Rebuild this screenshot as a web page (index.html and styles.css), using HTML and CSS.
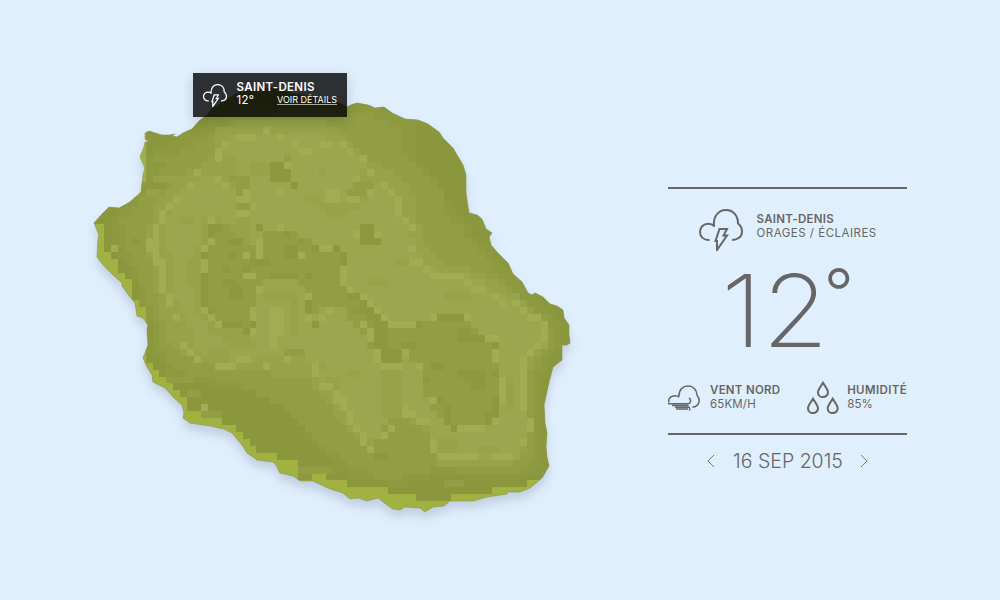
FILE: index.html
```html
<!DOCTYPE html>
<html lang="fr">
<head>
<meta charset="utf-8">
<title>Météo Saint-Denis</title>
<link rel="stylesheet" href="styles.css">
</head>
<body>
<svg class="defs" width="0" height="0">
  <symbol id="storm" viewBox="0 0 44 42">
    <path d="M10.500 31C4.500 31.500 1 27.500 1 22.900C1 18.300 4.500 14.700 9.300 14.700C11.700 14.700 13.700 15.500 15.300 17M15 17.800C13.800 8 19 1 27 1C34.500 1 39 7 39 14.500C41.500 16.500 43 19 43 22.500C43 28 38.500 31 33 31"/>
    <path d="M20.500 20H28L24.500 26.500H28L18 41V32H16.500Z"/>
  </symbol>
</svg>
<main class="stage">
  <section class="map">
    <svg class="island" viewBox="80 60 500 470">
      <defs>
        <clipPath id="coast"><path d="M109 207L119 208L130 202L141 192L143 175L145 168L140 157L144 147L145 142L149 142L145 139L145 133L149 131L155 133L162 135L170 135L175 134L172 136L177 137L183 133L192 129L199 121L207 115L213 108L223 102L237 93L267 88L277 87L287 92L313 97L333 100L347 107L351 105L357 103L368 105L375 108L384 107L392 113L405 119L418 120L428 124L439 132L443 138L453 148L463 165L466 175L466 193L468 207L469 213L477 215L482 219L486 229L492 233L489 237L491 245L497 252L508 263L513 274L522 282L528 293L532 295L535 293L543 297L550 304L557 306L563 310L564 318L569 325L569 335L570 343L567 345L562 345L562 360L553 367L549 382L544 405L545 423L547 433L546 447L547 457L549 466L542 478L530 488L520 492L508 492L507 494L487 497L473 501L450 501L444 506L433 507L425 512L420 508L405 507L400 510L393 509L387 505L378 498L367 501L358 498L350 499L343 493L330 489L313 481L300 481L293 476L280 473L276 465L273 462L257 460L247 453L242 445L232 433L224 429L210 426L190 423L183 418L184 413L182 405L174 398L165 388L153 382L152 375L147 367L143 358L148 345L147 330L148 325L143 318L137 316L135 303L130 297L122 286L122 283L113 275L103 265L97 257L98 238L99 235L94 223L103 213Z"/></clipPath>
      </defs>
      <g clip-path="url(#coast)">
        <rect class="shore" x="80" y="60" width="500" height="470"/>
        <g id="terrain" class="terrain"></g>
      </g>
      <path class="outline" d=""/>
    </svg>
    <div class="tooltip">
      <svg class="tooltip-icon"><use href="#storm"/></svg>
      <div class="tooltip-body">
        <strong class="tooltip-city">SAINT-DENIS</strong>
        <div class="tooltip-row"><span class="tooltip-temp">12°</span><a class="tooltip-link">VOIR DÉTAILS</a></div>
      </div>
    </div>
  </section>
  <aside class="panel">
    <div class="card">
      <div class="current">
        <svg class="current-icon"><use href="#storm"/></svg>
        <div class="label"><b>SAINT-DENIS</b><span class="sky">ORAGES / ÉCLAIRES</span></div>
      </div>
      <div class="degrees"><span class="value">12</span><span class="ring">°</span></div>
      <div class="metrics">
        <div class="metric">
          <svg class="wind" viewBox="0 0 32 28"><path d="M.8 17.500C0 13.500 3 10.700 7 10.700C8.500 10.700 10 11 11.400 12.200M11 11C11 4.500 15 1 20 1C25.500 1 29 5 29 10.200C31 12.500 31.500 14.500 31 17C30 20.500 27.500 22 24.500 22.300M21 12.800C23.500 15 23 18.500 20 18.700H0M4 20.500H20.500M7 22.300H21C22 22.500 21.500 24 21.700 25.500M8 24H20"/></svg>
          <div class="label"><b>VENT NORD</b><span>65KM/H</span></div>
        </div>
        <div class="metric">
          <svg class="drops" viewBox="0 0 32 33"><path id="drop" d="M16 1.700C13.800 5.500 11 8.500 11 11.200A5 4.900 0 0 0 21 11.200C21 8.500 18.200 5.500 16 1.700Z"/><use href="#drop" x="-10" y="16"/><use href="#drop" x="9.700" y="16"/></svg>
          <div class="label"><b class="humidity">HUMIDITÉ</b><span>85%</span></div>
        </div>
      </div>
    </div>
    <nav class="date">
      <svg class="arrow" viewBox="0 0 8 14"><path d="M7 1L1 7L7 13"/></svg>
      <span class="day">16 SEP 2015</span>
      <svg class="arrow" viewBox="0 0 8 14"><path d="M1 1L7 7L1 13"/></svg>
    </nav>
  </aside>
</main>
<script src="terrain.js"></script>
</body>
</html>
```
FILE: styles.css
```css
* { box-sizing: border-box; }
body { margin: 0; background: #e0effd; color: #666; font-family: Inter, "Liberation Sans", sans-serif; }
.defs { position: absolute; }
.stage { display: flex; height: 600px; overflow: hidden; padding-left: 80px; }
.map { position: relative; width: 500px; padding-top: 60px; }
.island { display: block; width: 500px; height: 470px; overflow: visible; filter: drop-shadow(0 7px 5px rgba(45, 55, 90, .17)); }
.shore { fill: #a1b142; }
.terrain { shape-rendering: crispEdges; }
.outline { fill: none; stroke: #87994d; stroke-width: .8; opacity: .8; }
.tooltip { position: absolute; left: 113px; top: 73px; width: 154px; height: 44px; display: flex; align-items: flex-start; padding: 8px 10px; background: rgba(0, 0, 0, .8); color: #fff; box-shadow: 0 4px 12px rgba(0, 0, 0, .16); }
.tooltip-icon { width: 24px; height: 23px; margin-top: 3px; margin-right: 9.500px; flex: none; fill: none; stroke: #fff; stroke-width: 2.300; }
.tooltip-body { flex: 1; line-height: 13px; white-space: nowrap; }
.tooltip-city { display: block; font-size: 11.500px; font-weight: 600; line-height: 13px; letter-spacing: .33px; }
.tooltip-row { display: flex; justify-content: space-between; height: 13px; }
.tooltip-temp { font-size: 11.500px; font-weight: 400; letter-spacing: .3px; }
.tooltip-link { font-size: 9px; line-height: 9px; height: 10px; margin-top: 1px; border-bottom: 1px solid #a8a89c; }
.panel { margin-left: 88px; width: 239px; padding-top: 187px; }
.card { height: 248px; border-top: 2px solid #666; border-bottom: 2px solid #666; }
.current { display: flex; padding: 20px 0 0 31px; height: 75px; }
.current-icon { width: 44px; height: 42px; margin-right: 13.500px; flex: none; fill: none; stroke: #666; stroke-width: 2; }
.label { display: flex; flex-direction: column; align-items: flex-start; font-size: 11.500px; line-height: 14px; white-space: nowrap; }
.label b { font-weight: 600; letter-spacing: .27px; }
.label span { font-weight: 400; letter-spacing: .15px; }
.label .sky { letter-spacing: .5px; }
.label .humidity { letter-spacing: .37px; }
.current .label { padding-top: 3px; }
.degrees { display: flex; height: 117px; padding-left: 53px; font-size: 100px; font-weight: 250; line-height: 94px; }
.value { transform: scaleX(1.08); transform-origin: left; }
.ring { margin: -19px 0 0 3px; font-size: 66px; font-weight: 270; }
.metrics { display: flex; justify-content: space-between; }
.metric { display: flex; }
.wind { width: 32px; height: 28px; margin: 4px 10px 0 0; fill: none; stroke: #666; stroke-width: 1.500; }
.drops { width: 32px; height: 33px; margin-right: 8px; fill: none; stroke: #666; stroke-width: 2; }
.metric .label { padding-top: 2px; }
.date { display: flex; align-items: center; justify-content: space-between; height: 52px; padding: 0 39px; }
.day { padding-left: 1px; font-size: 19.500px; font-weight: 300; white-space: nowrap; }
.arrow { width: 8px; height: 14px; fill: none; stroke: #777; stroke-width: 1; }
```
FILE: terrain.js
```javascript
const CELL = 6.93, X0 = 97.07, Y0 = 99.3;
const DARK = '#8a973d', SLOPE = '#8d9a40', MID = '#919e43', SOFT = '#96a349', LIGHT = '#9aa74e', PEAK = '#a1ad53';
const COLS = 70, ROWS = 60;
const grid = Array.from({ length: ROWS + 3 }, () => Array(COLS).fill(null));
const TOP = 3;

function inside(x, y, p) {
  let hit = false;
  for (let i = 0, j = p.length - 2; i < p.length; j = i, i += 2) {
    if ((p[i + 1] > y) !== (p[j + 1] > y) && x < (p[j] - p[i]) * (y - p[i + 1]) / (p[j + 1] - p[i + 1]) + p[i]) hit = !hit;
  }
  return hit;
}
function area(color, p) {
  for (let r = 0; r < grid.length; r++)
    for (let c = 0; c < COLS; c++)
      if (inside(X0 + (c + .5) * CELL, Y0 + (r - TOP + .5) * CELL, p)) grid[r][c] = color;
}
function spots(color, list) {
  for (const [x, y, w = 1, h = 1] of list) {
    const c = Math.round((x - X0) / CELL), r = Math.round((y - Y0) / CELL) + TOP;
    for (let j = 0; j < h; j++) for (let i = 0; i < w; i++) grid[r + j][c + i] = color;
  }
}

// Land above the shoreline.
area(DARK, [97,200,145,192,145,60,580,60,580,480,526,480,526,487,492,487,492,494,450,494,450,501,416,501,416,494,388,494,388,487,347,487,347,480,326,480,326,473,298,473,298,459,277,459,277,452,257,452,257,445,250,445,250,438,243,438,243,431,236,431,236,425,222,425,222,418,202,418,202,411,187,411,187,397,180,397,180,390,173,390,173,383,166,383,166,376,160,376,160,369,153,369,153,362,146,362,146,307,139,307,139,300,132,300,132,279,125,279,125,272,118,272,118,258,111,258,111,251,104,251,104,224,97,224]);
area(SLOPE, [360,104,416,118,416,160,436,180,444,200,458,210,474,235,490,255,520,285,545,305,560,320,560,345,547,365,540,400,542,450,535,475,490,480,440,474,420,482,400,486,360,480,330,474,316,444,280,422,250,400,205,386,170,375,153,352,150,325,140,300,132,270,112,245,108,225,140,190,150,150,190,135,240,108]);
area(MID, [360,112,400,128,405,152,424,172,440,190,443,215,460,225,480,250,495,270,515,290,530,305,545,318,555,330,553,345,538,360,533,400,533,450,525,468,490,472,440,466,420,474,400,476,370,470,350,465,330,450,310,432,280,412,250,388,190,375,165,362,160,330,150,310,138,270,124,245,128,215,150,190,162,162,195,143,240,118]);
area(DARK, [190,388,250,390,290,412,310,440,330,458,330,470,300,458,262,440,235,415,200,400]);
area(SOFT, [218,127,265,118,330,124,355,148,373,160,392,170,410,190,420,225,428,250,450,266,475,270,500,285,530,305,548,325,540,350,530,370,530,440,520,463,440,465,425,440,400,430,365,450,340,420,310,380,240,368,200,362,170,345,157,300,145,240,155,205,180,175,210,160]);
area(LIGHT, [220,145,235,135,300,134,345,140,368,163,355,182,390,185,402,200,412,240,430,268,470,274,500,295,525,310,545,320,545,345,528,360,525,440,515,460,435,460,430,430,400,405,375,445,345,410,320,378,300,352,240,362,205,355,175,330,168,290,160,240,175,200,200,177,225,180]);
area(SOFT, [158,210,165,210,175,300,195,340,180,345,163,310]);
area(SOFT, [203,215,250,228,262,330,250,340,215,338,196,310,196,250]);
area(MID, [208,222,222,222,240,237,257,251,263,230,285,228,315,244,340,245,345,280,348,294,375,315,392,327,415,327,430,318,465,318,490,340,498,370,498,422,445,425,428,405,422,370,400,355,385,363,370,345,340,305,320,310,310,325,302,300,298,282,266,279,255,302,250,330,222,327,203,307,203,260]);
area(SOFT, [215,145,236,160,242,185,230,188,215,178]);
area(LIGHT, [258,286,270,280,300,280,304,300,305,335,290,350,260,340,257,305]);
area(SOFT, [263,293,298,293,298,335,289,335,289,300,270,300]);
area(SOFT, [380,369,402,369,402,400,388,420,380,418]);
area(SOFT, [325,203,346,203,346,189,374,189,370,202,345,216,318,212]);
area(MID, [388,418,402,418,428,432,428,455,395,455,370,452]);
spots(SOFT, [[250,161,3,2],[319,168],[305,196,2],[236,217,2],[146,189,2],[153,175,3],[215,168,2],[367,279,3],[395,258,2],[443,293,4,1],[229,341,4],[208,348,3],[298,362,4],[325,376,2,2],[436,438,3,2],[505,376,1,5],[477,445,3],[346,369,2],[180,217,2,1],[187,258,1,4],[222,334,2]]);
spots(MID, [[153,154,2],[166,161,3],[173,168,2],[229,175,3],[236,182,2],[236,189],[236,203,2],[284,154],[353,182,3],[346,189,3],[284,348,3],[243,376,5],[284,383,3],[284,404,2],[298,411,2],[319,432,2],[111,238,1,2],[118,217,3],[187,390,2],[201,411,3],[298,466,5],[443,480,3],[505,466,2],[374,473,4],[457,466,3],[166,376,4]]);
spots('#8c993f', [[270,161,2],[270,168,2,2],[284,168],[277,175,2],[291,182],[208,224,2],[208,231],[256,224],[284,231],[298,237],[284,244,2,2],[229,237,2],[229,251],[201,251],[201,272,1,5],[270,272,4],[305,272],[250,258,3],[242,265],[312,244],[332,244],[340,251,1,2],[360,224,2,3],[374,237],[222,279,2],[229,286,2,2],[222,265],[208,306],[222,320,3],[243,327],[250,320],[305,300,1,2],[312,320],[346,293,2],[360,300,2],[353,307,4],[367,314,3],[374,320,2,1],[374,327,2,3],[381,349,3,2],[436,314,4],[415,320],[457,327,2,2],[470,334,2],[491,341],[401,341,2],[457,369,3],[471,369,2,3],[464,376],[429,362,2],[422,376],[491,369],[436,397],[443,404,1,3],[450,425],[491,397,1,3],[485,411,1,2],[111,230,1,3],[298,473,2],[333,466,2],[152,161,2],[146,182,3],[132,237],[374,452,2]]);
spots(PEAK, [[236,134,3],[263,127],[277,134],[222,141],[215,148,1,2],[291,141],[298,148,2],[319,141,2],[339,141],[346,148],[360,154],[367,168],[353,175],[284,161],[194,168],[187,182],[215,175],[222,182],[242,189],[236,196,2],[250,203],[236,210,2],[277,189],[325,189,2,2],[346,196,2],[367,189],[381,182],[388,189],[395,196,1,3],[401,217],[408,224],[408,244],[408,258,2],[422,265],[429,272,5],[173,196],[166,203],[160,210,1,2],[153,224,1,2],[146,237,2,2],[153,251,1,2],[160,258,1,5],[167,293,1,2],[208,217],[208,237],[201,244],[201,258,1,2],[256,237,1,3],[242,251],[277,224],[298,251],[242,272,2],[256,286],[305,293],[319,244,2],[340,265,1,3],[346,286],[353,230],[374,230],[360,293],[367,300],[374,307],[381,314],[388,320,4],[430,314],[463,314],[463,279],[470,286,2],[491,293],[498,300],[512,300],[519,307],[526,314,2],[540,320,1,3],[533,341],[526,348],[485,334,2],[491,348,1,2],[360,320],[367,327,1,2],[374,348,1,2],[402,348],[381,362,3],[416,362],[429,397],[402,404,1,2],[409,411],[416,418,2],[340,397,1,2],[346,411,1,2],[353,425],[360,432,1,2],[367,445],[381,432],[388,425],[429,438,1,2],[436,452,6],[491,452,3],[457,425,4],[491,418],[498,376,1,4],[520,356,1,8],[526,418,1,2],[520,438],[187,348],[194,355],[215,362,3],[236,355,2],[263,362],[284,355],[312,362,1,2],[319,383,2],[333,390,1,2],[201,404],[201,306],[208,314],[215,320],[173,314],[180,341],[250,306,1,2],[270,306,2,4],[270,334,1,2],[305,314],[319,314,1,1],[326,307],[111,244],[250,327]]);

const NS = 'http://www.w3.org/2000/svg';
const terrain = document.getElementById('terrain');
grid.forEach((row, r) => {
  for (let c = 0; c < COLS;) {
    let end = c + 1;
    while (end < COLS && row[end] === row[c]) end++;
    if (row[c]) {
      const rect = document.createElementNS(NS, 'rect');
      rect.setAttribute('x', c ? X0 + c * CELL : 90);
      rect.setAttribute('y', Y0 + (r - TOP) * CELL);
      rect.setAttribute('width', (end - c) * CELL + (c ? 0 : X0 - 90));
      rect.setAttribute('height', CELL);
      rect.setAttribute('fill', row[c]);
      terrain.append(rect);
    }
    c = end;
  }
});
document.querySelector('.outline').setAttribute('d', document.querySelector('#coast path').getAttribute('d'));
```
